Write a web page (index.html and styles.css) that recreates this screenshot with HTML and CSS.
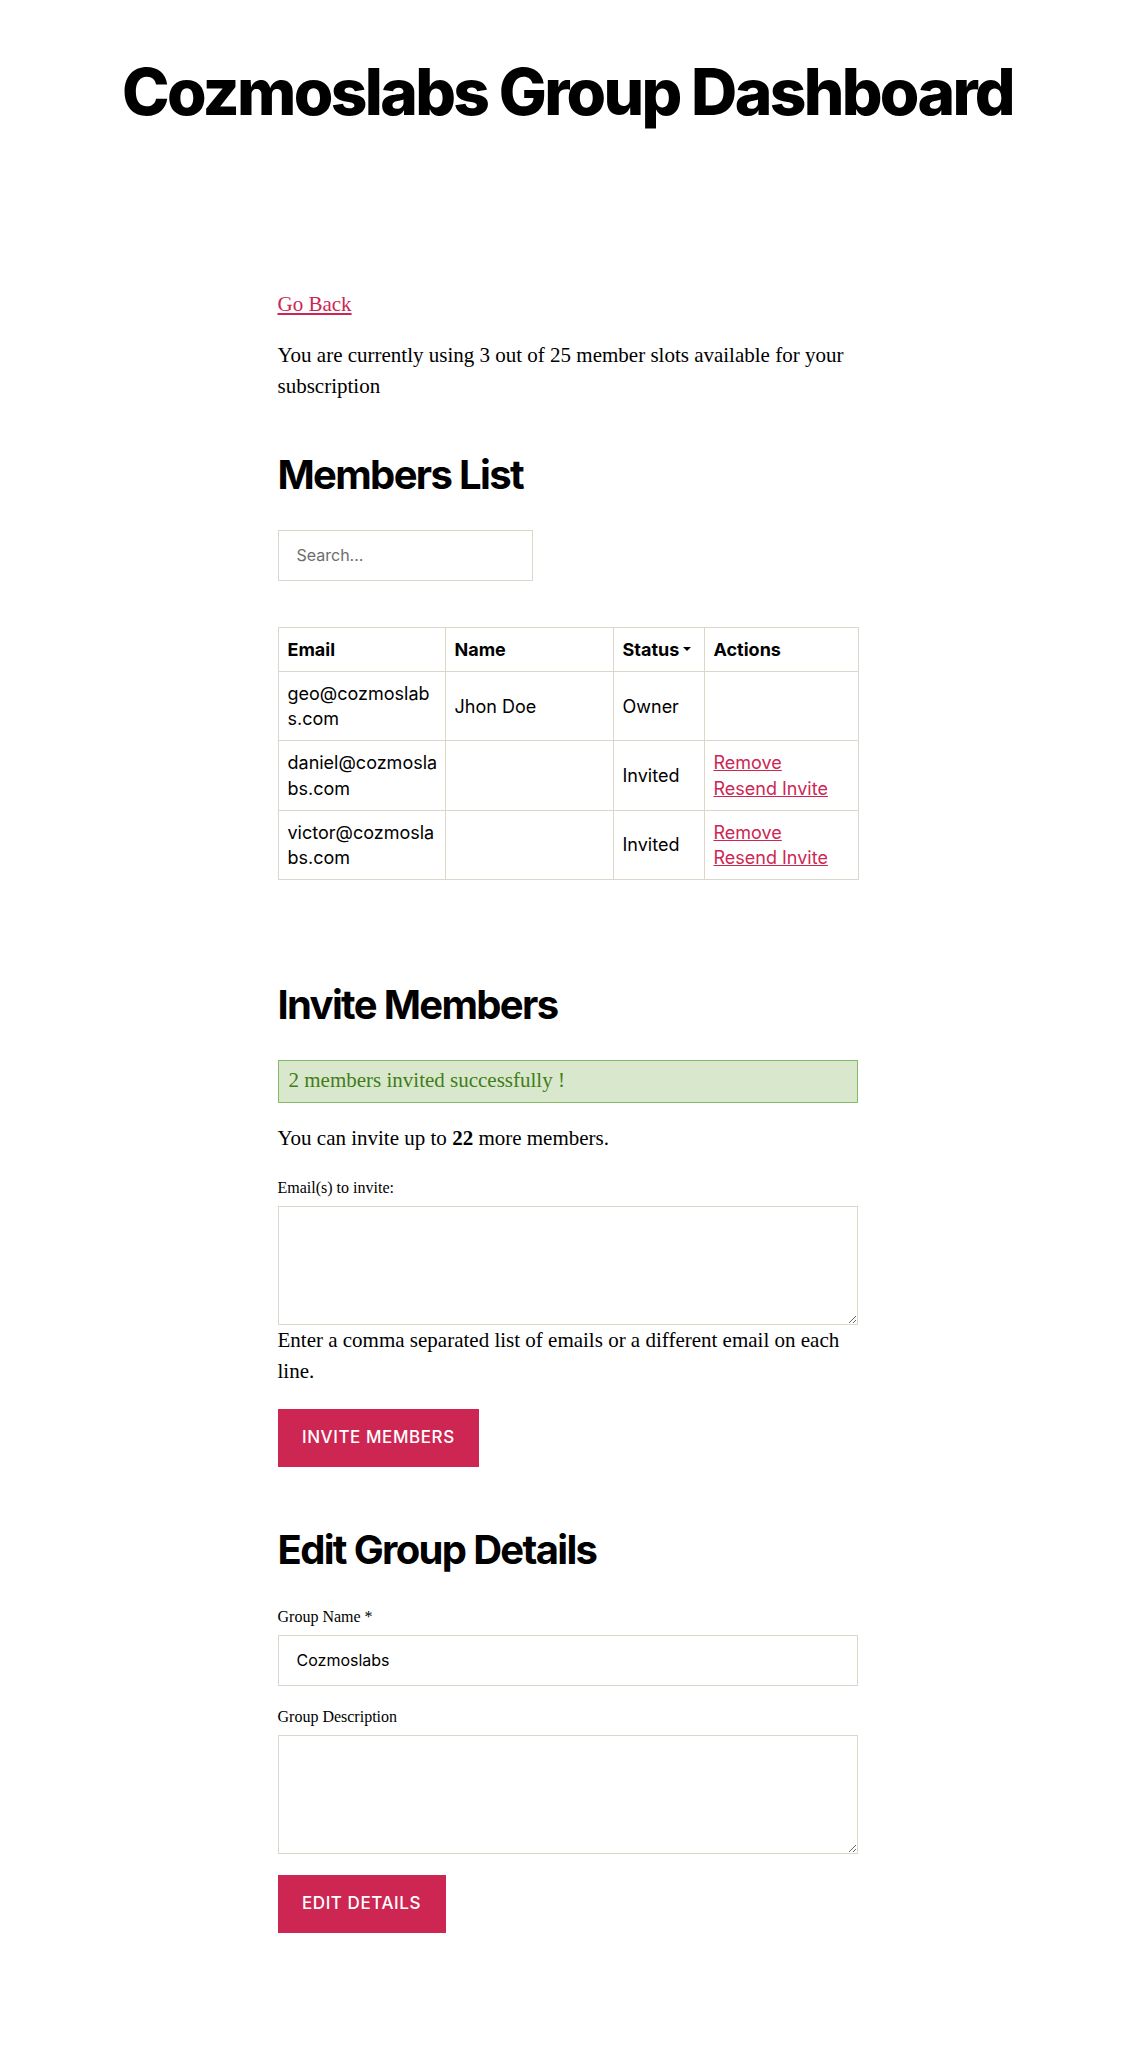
FILE: index.html
```html
<!DOCTYPE html>
<html lang="en">
<head>
<meta charset="utf-8">
<title>Cozmoslabs Group Dashboard</title>
<link rel="stylesheet" href="styles.css">
</head>
<body>
<header class="page-header">
  <h1 class="page-title">Cozmoslabs Group Dashboard</h1>
</header>
<main class="content">
  <p class="back"><a href="#">Go Back</a></p>
  <p class="usage">You are currently using 3 out of 25 member slots available for your subscription</p>

  <h3 class="section-title members-title">Members List</h3>
  <input class="search" type="text" placeholder="Search...">

  <table class="members">
    <colgroup>
      <col class="col-email">
      <col class="col-name">
      <col class="col-status">
      <col class="col-actions">
    </colgroup>
    <thead>
      <tr>
        <th>Email</th>
        <th>Name</th>
        <th>Status<span class="caret"></span></th>
        <th>Actions</th>
      </tr>
    </thead>
    <tbody>
      <tr>
        <td class="email">geo@cozmoslab<br>s.com</td>
        <td>Jhon Doe</td>
        <td>Owner</td>
        <td></td>
      </tr>
      <tr>
        <td class="email">daniel@cozmosla<br>bs.com</td>
        <td></td>
        <td>Invited</td>
        <td><a href="#">Remove</a><br><a href="#">Resend Invite</a></td>
      </tr>
      <tr>
        <td class="email">victor@cozmosla<br>bs.com</td>
        <td></td>
        <td>Invited</td>
        <td><a href="#">Remove</a><br><a href="#">Resend Invite</a></td>
      </tr>
    </tbody>
  </table>

  <section class="invite">
    <h3 class="section-title">Invite Members</h3>
    <div class="notice">2 members invited successfully !</div>
    <p class="invite-limit">You can invite up to <strong>22</strong> more members.</p>
    <label class="field-label" for="emails">Email(s) to invite:</label>
    <textarea class="textarea" id="emails"></textarea>
    <p class="help">Enter a comma separated list of emails or a different email on each line.</p>
    <button class="btn" type="button">Invite Members</button>
  </section>

  <section class="edit">
    <h3 class="section-title edit-title">Edit Group Details</h3>
    <label class="field-label" for="gname">Group Name *</label>
    <input class="text-input" id="gname" type="text" value="Cozmoslabs">
    <label class="field-label" for="gdesc">Group Description</label>
    <textarea class="textarea" id="gdesc"></textarea>
    <button class="btn edit-btn" type="button">Edit Details</button>
  </section>
</main>
</body>
</html>
```

FILE: styles.css
```css
html, body {
  background: #fff;
}

body {
  margin: 0;
  font-family: "Liberation Serif", "Times New Roman", serif;
  color: #000;
}

.page-title {
  margin: 56px 0 0;
  text-align: center;
  font-family: Inter, "Liberation Sans", sans-serif;
  font-weight: 800;
  font-size: 64px;
  line-height: 1.138;
  letter-spacing: -0.0415625em;
}

.content {
  width: 580px;
  margin: 0 auto;
  padding-bottom: 112px;
  font-size: 21px;
  line-height: 1.476;
}

a {
  color: #cd2653;
}

.back {
  margin: 160px 0 20px;
}

.usage {
  margin: 0;
}

.section-title {
  margin: 0 0 30px;
  font-family: Inter, "Liberation Sans", sans-serif;
  font-weight: 700;
  font-size: 40px;
  line-height: 1.25;
  letter-spacing: -0.0415625em;
}

.members-title {
  margin-top: 48px;
}

.search,
.text-input {
  display: block;
  box-sizing: border-box;
  height: 51px;
  padding: 0 18px;
  border: 1px solid #dcd7ca;
  border-radius: 0;
  background: #fff;
  font-family: Inter, "Liberation Sans", sans-serif;
  font-size: 16px;
  color: #000;
  outline: none;
}

.search {
  width: 255px;
  margin: 0 0 46px;
}

.search::placeholder {
  color: #6d6d6d;
  opacity: 1;
}

.text-input {
  width: 100%;
  margin: 0 0 19px;
}

.members {
  width: 580px;
  table-layout: fixed;
  border-collapse: collapse;
  border: 1px solid #dcd7ca;
  margin: 0 0 99.5px;
  font-family: Inter, "Liberation Sans", sans-serif;
  font-size: 18px;
  line-height: 1.4;
}

.col-email { width: 167px; }
.col-name { width: 168px; }
.col-status { width: 91px; }
.col-actions { width: 154px; }

.members th,
.members td {
  border: 1px solid #dcd7ca;
  padding: 9px;
  text-align: left;
  vertical-align: middle;
}

.members th {
  font-weight: 700;
}

.members td.email {
  white-space: nowrap;
}

.caret {
  display: inline-block;
  margin-left: 4px;
  vertical-align: middle;
  border-left: 4px solid transparent;
  border-right: 4px solid transparent;
  border-top: 4px solid #000;
  position: relative;
  top: -2px;
}

.notice {
  margin: 0 0 20px;
  padding: 4px 10px 6px;
  border: 1px solid #82bb64;
  background: #d9e8cc;
  color: #3f7d1a;
}

.invite-limit {
  margin: 0 0 22px;
}

.field-label {
  display: block;
  margin: 0 0 6px;
  font-size: 16px;
  line-height: 24px;
}

.textarea {
  display: block;
  box-sizing: border-box;
  width: 100%;
  height: 119px;
  margin: 0;
  padding: 15px 18px;
  border: 1px solid #dcd7ca;
  border-radius: 0;
  background: #fff;
  font-family: Inter, "Liberation Sans", sans-serif;
  font-size: 16px;
  outline: none;
}

.help {
  margin: 0 0 22px;
}

.btn {
  display: block;
  margin: 0;
  padding: 18.7px 24.5px;
  border: 0;
  border-radius: 0;
  background: #cd2653;
  color: #fff;
  font-family: Inter, "Liberation Sans", sans-serif;
  font-weight: 500;
  font-size: 17px;
  line-height: 1.25;
  letter-spacing: 0.0333em;
  text-transform: uppercase;
}

.edit-title {
  margin-top: 57.5px;
}

.edit .textarea {
  margin-bottom: 21px;
}
```
